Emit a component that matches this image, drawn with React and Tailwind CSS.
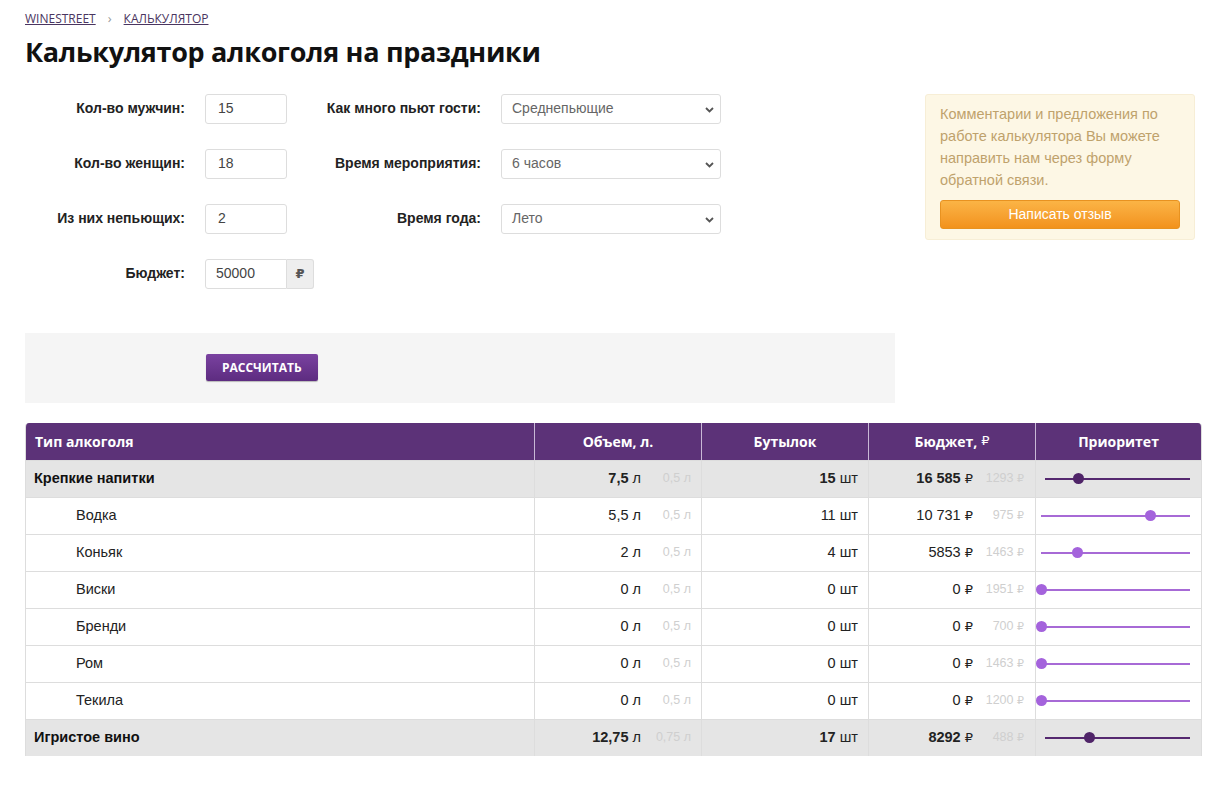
import { useState } from "react";

const rows = [
  { name: "Крепкие напитки", group: true, vol: "7,5", step: "0,5", btl: "15", budget: "16 585", price: "1293", pos: 23 },
  { name: "Водка", vol: "5,5", step: "0,5", btl: "11", budget: "10 731", price: "975", pos: 73 },
  { name: "Коньяк", vol: "2", step: "0,5", btl: "4", budget: "5853", price: "1463", pos: 24 },
  { name: "Виски", vol: "0", step: "0,5", btl: "0", budget: "0", price: "1951", pos: 0 },
  { name: "Бренди", vol: "0", step: "0,5", btl: "0", budget: "0", price: "700", pos: 0 },
  { name: "Ром", vol: "0", step: "0,5", btl: "0", budget: "0", price: "1463", pos: 0 },
  { name: "Текила", vol: "0", step: "0,5", btl: "0", budget: "0", price: "1200", pos: 0 },
  { name: "Игристое вино", group: true, vol: "12,75", step: "0,75", btl: "17", budget: "8292", price: "488", pos: 30 },
];

function Select({ value }) {
  return (
    <div className="relative w-[220px] h-[30px] border border-[#ddd] rounded-[3px] bg-white flex items-center px-[10px] text-[14px] font-normal text-[#666]">
      {value}
      <svg className="absolute right-[6px] top-[12px]" width="9" height="6" viewBox="0 0 9 6">
        <path d="M1 1l3.5 3.5L8 1" fill="none" stroke="#555" strokeWidth="1.8" />
      </svg>
    </div>
  );
}

function Input({ value }) {
  return (
    <div className="w-[82px] h-[30px] border border-[#ddd] rounded-[3px] bg-white flex items-center px-[12px] text-[14px] font-normal text-[#444]">
      {value}
    </div>
  );
}

function Slider({ pos, group }) {
  const track = group ? "bg-[#55286f]" : "bg-[#a76ad6]";
  const thumb = group ? "bg-[#4f2468]" : "bg-[#a463dc]";
  return (
    <div className={`relative h-[12px] flex items-center ${group ? "ml-[9px]" : "ml-[5px]"} mr-[11px]`}>
      <div className={`h-[2px] w-full ${track}`} />
      <div
        className={`absolute top-0 w-[11px] h-[11px] rounded-full ${thumb}`}
        style={{ left: `calc(${pos}% - 5px)` }}
      />
    </div>
  );
}

export default function App() {
  const [people] = useState({ men: "15", women: "18", sober: "2", budget: "50000" });

  return (
    <div className="w-[1232px] h-[803px] bg-white font-['Liberation_Sans',Arial,sans-serif] text-[#222]">
      <div className="px-[25px] pt-[9px]">
        <div className="flex items-center gap-[12px] text-[12px] text-[#4a3560] font-['Open_Sans',sans-serif]">
          <span className="underline">WINESTREET</span>
          <span className="text-[#999] text-[13px]">›</span>
          <span className="underline">КАЛЬКУЛЯТОР</span>
        </div>
        <h1 className="mt-[6px] text-[27px] leading-[34px] font-bold text-[#111] font-['Open_Sans',sans-serif] tracking-[-0.3px]">
          Калькулятор алкоголя на праздники
        </h1>

        <div className="flex mt-[25px]">
          <div className="w-[870px]">
            <div className="flex flex-col gap-[25px] text-[14px] font-bold text-[#222]">
              <div className="flex items-center h-[30px]">
                <div className="w-[160px] text-right">Кол-во мужчин:</div>
                <div className="ml-[20px]"><Input value={people.men} /></div>
                <div className="w-[194px] text-right">Как много пьют гости:</div>
                <div className="ml-[20px]"><Select value="Среднепьющие" /></div>
              </div>
              <div className="flex items-center h-[30px]">
                <div className="w-[160px] text-right">Кол-во женщин:</div>
                <div className="ml-[20px]"><Input value={people.women} /></div>
                <div className="w-[194px] text-right">Время мероприятия:</div>
                <div className="ml-[20px]"><Select value="6 часов" /></div>
              </div>
              <div className="flex items-center h-[30px]">
                <div className="w-[160px] text-right">Из них непьющих:</div>
                <div className="ml-[20px]"><Input value={people.sober} /></div>
                <div className="w-[194px] text-right">Время года:</div>
                <div className="ml-[20px]"><Select value="Лето" /></div>
              </div>
              <div className="flex items-center h-[30px]">
                <div className="w-[160px] text-right">Бюджет:</div>
                <div className="ml-[20px] flex font-normal">
                  <div className="w-[82px] h-[30px] border border-[#ddd] rounded-l-[3px] flex items-center px-[10px] text-[14px] text-[#444]">
                    {people.budget}
                  </div>
                  <div className="w-[27px] h-[30px] border border-l-0 border-[#ddd] rounded-r-[3px] bg-[#eee] flex items-center justify-center text-[13px] font-bold text-[#555] font-['DejaVu_Sans',sans-serif]">
                    ₽
                  </div>
                </div>
              </div>
            </div>

            <div className="mt-[44px] h-[70px] bg-[#f5f5f5] flex items-center pl-[181px]">
              <button className="h-[27px] px-[16px] rounded-[2px] bg-gradient-to-b from-[#7a42a0] to-[#5d2c80] text-white text-[12px] font-bold font-['Open_Sans',sans-serif] shadow-[0_1px_1px_rgba(0,0,0,0.25)]">
                РАССЧИТАТЬ
              </button>
            </div>
          </div>

          <div className="ml-[30px] w-[270px] h-[146px] bg-[#fdf7e5] border border-[#f7eed6] rounded-[3px] px-[14px] pt-[8px]">
            <p className="text-[14.5px] leading-[22px] text-[#bfa26c]">
              Комментарии и предложения по работе калькулятора Вы можете направить нам через форму обратной связи.
            </p>
            <button className="mt-[9px] w-[240px] h-[29px] rounded-[3px] bg-gradient-to-b from-[#fbb445] to-[#f2921b] border border-[#e89220] text-white text-[14px]">
              Написать отзыв
            </button>
          </div>
        </div>

        <div className="mt-[20px] w-[1177px] border border-[#ddd] border-t-0 border-b-0 rounded-t-[4px] overflow-hidden">
          <div className="grid grid-cols-[508px_167px_167px_167px_166px] h-[37px] bg-[#5c3278] text-white text-[14px] font-bold font-['Open_Sans',sans-serif]">
            <div className="flex items-center px-[9px]">Тип алкоголя</div>
            <div className="flex items-center justify-center border-l border-[#c9b8d6]">Объем, л.</div>
            <div className="flex items-center justify-center border-l border-[#c9b8d6]">Бутылок</div>
            <div className="flex items-center justify-center border-l border-[#c9b8d6]">
              Бюджет, <span className="ml-[4px] font-['DejaVu_Sans',sans-serif] text-[13px] font-normal">₽</span>
            </div>
            <div className="flex items-center justify-center border-l border-[#c9b8d6]">Приоритет</div>
          </div>
          {rows.map((r) => (
            <div
              key={r.name}
              className={`grid grid-cols-[508px_167px_167px_167px_166px] h-[37px] border-t border-[#ddd] text-[14.5px] ${
                r.group ? "bg-[#e5e5e5] font-bold" : "bg-white"
              }`}
            >
              <div className={`flex items-center ${r.group ? "pl-[8px] text-[#111]" : "pl-[50px] text-[#222]"}`}>{r.name}</div>
              <div className="flex items-center justify-end border-l border-[#ddd] pr-[10px]">
                <span>
                  {r.vol} <span className="font-normal">л</span>
                </span>
                <span className="w-[50px] text-right text-[12.5px] font-normal text-[#cfcfcf]">{r.step} л</span>
              </div>
              <div className="flex items-center justify-end border-l border-[#ddd] pr-[10px]">
                <span>
                  {r.btl} <span className="font-normal">шт</span>
                </span>
              </div>
              <div className="flex items-center justify-end border-l border-[#ddd] pr-[11px]">
                <span>
                  {r.budget} <span className="font-normal font-['DejaVu_Sans',sans-serif] text-[13px]">₽</span>
                </span>
                <span className="w-[51px] text-right text-[12.5px] font-normal text-[#cfcfcf]">
                  {r.price} <span className="font-['DejaVu_Sans',sans-serif] text-[11px]">₽</span>
                </span>
              </div>
              <div className="flex items-center border-l border-[#ddd]">
                <div className="flex-1">
                  <Slider pos={r.pos} group={r.group} />
                </div>
              </div>
            </div>
          ))}
        </div>
      </div>
    </div>
  );
}
